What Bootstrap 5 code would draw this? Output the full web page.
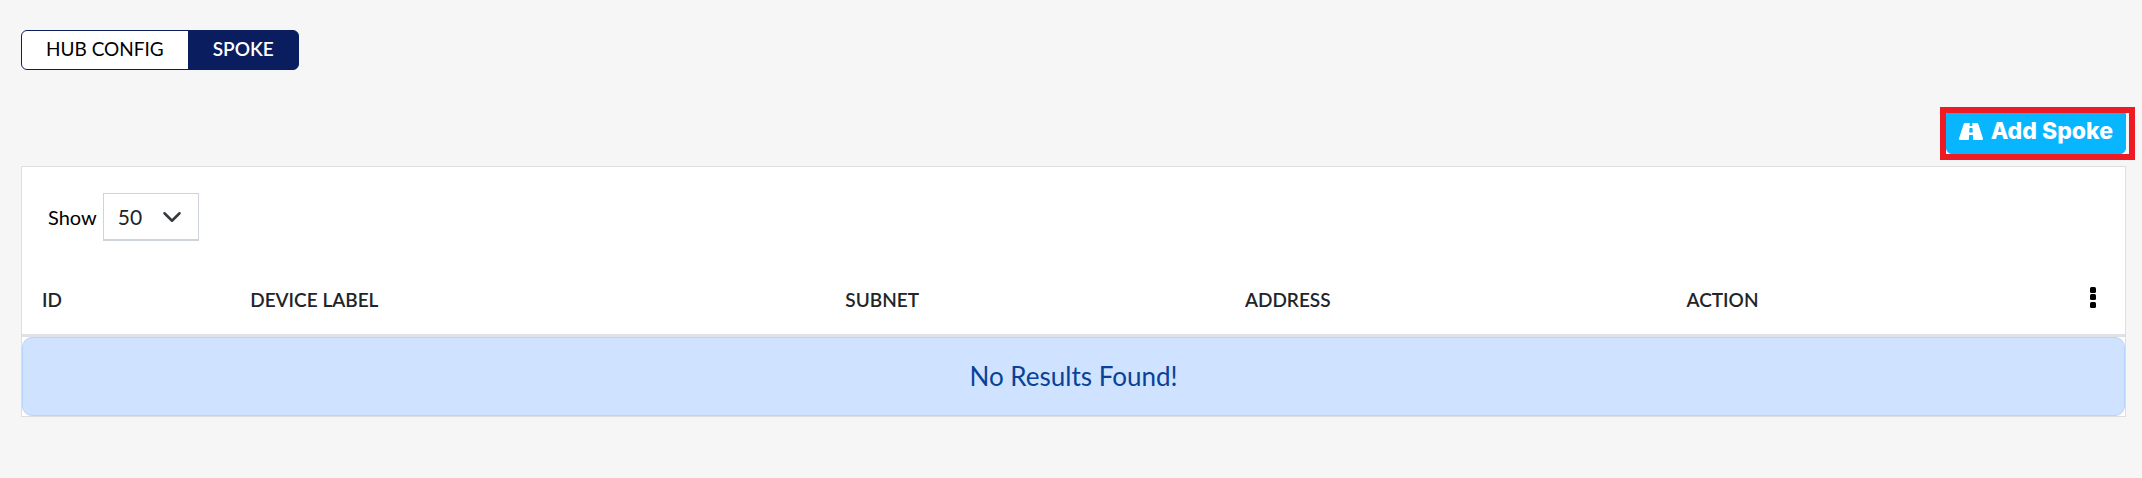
<!DOCTYPE html>
<html lang="en">
<head>
<meta charset="utf-8">
<meta name="viewport" content="width=device-width, initial-scale=1">
<title>Spoke</title>
<link href="https://cdn.jsdelivr.net/npm/bootstrap@5.3.0/dist/css/bootstrap.min.css" rel="stylesheet">
<style>
body { background: #f6f6f6; font-family: Lato, sans-serif; font-size: 20px; line-height: 24px; color: #212529; }
.page { padding: 30px 16px 0 21px; }
.mode-tabs .btn { --bs-btn-font-size: 19px; --bs-btn-line-height: 24px; --bs-btn-padding-x: 24px; --bs-btn-border-radius: 6px; --bs-btn-color: #000; --bs-btn-bg: #fff; --bs-btn-border-color: #0a1d5e; --bs-btn-hover-bg: #eef; --bs-btn-active-color: #fff; --bs-btn-active-bg: #0a1d5e; --bs-btn-active-border-color: #0a1d5e; padding-top: 6px; padding-bottom: 8px; }
.mode-tabs .btn.active { font-weight: 600; }
.toolbar { margin: 37px -9px 6px 0; }
.highlight { border: 6px solid #ed1c24; padding-right: 3px; }
.btn-spoke { --bs-btn-color: #fff; --bs-btn-bg: #08b5ff; --bs-btn-border-color: #08b5ff; --bs-btn-hover-color: #fff; --bs-btn-hover-bg: #009fe3; --bs-btn-padding-x: 12px; --bs-btn-padding-y: 5px; --bs-btn-font-size: 23px; --bs-btn-line-height: 24px; --bs-btn-font-weight: 800; font-family: Inter, sans-serif; border-radius: 0 0 6px 6px; padding-bottom: 10px; }
.panel { background: #fff; border: 1px solid #dcdfe1; }
.length { padding: 26px 26px 0; color: #000; gap: 6px; }
.length .form-select { width: 96px; height: 48px; border: 1px solid #ced4da; border-bottom-width: 2px; border-radius: 0; padding: 0 40px 0 14px; font-size: 21px; line-height: 30px; background-position: right 16px center; background-size: 20px 20px; }
.grid { table-layout: fixed; }
.grid th { padding: 45px 20px 21px; font-size: 19px; font-weight: 600; border-bottom: 3px solid #dee2e6; vertical-align: middle; }
.grid td { padding: 0; border: 0; }
.empty { --bs-alert-bg: #cfe2ff; --bs-alert-border-color: #b6d4fe; --bs-alert-color: #084298; --bs-alert-border-radius: 10px; font-size: 26px; line-height: 32px; padding: 22px 23px 23px; }
.c-id { width: 9.9%; } .c-label { width: 28.3%; } .c-subnet { width: 19%; } .c-address { width: 21%; } .c-action { width: 15%; }
</style>
<script src="https://cdn.jsdelivr.net/npm/bootstrap@5.3.0/dist/js/bootstrap.bundle.min.js"></script>
</head>
<body>
<main class="page">
  <div class="btn-group mode-tabs d-inline-flex" role="group" aria-label="Configuration">
    <button type="button" class="btn">HUB CONFIG</button>
    <button type="button" class="btn active" aria-pressed="true">SPOKE</button>
  </div>
  <div class="toolbar d-flex justify-content-end">
    <div class="highlight d-flex">
      <button type="button" class="btn btn-spoke d-flex align-items-center gap-2">
        <svg width="24" height="17" viewBox="0 0 24 17" aria-hidden="true"><path fill="#fff" fill-rule="evenodd" d="M6 0H10.800L10.600 3H13.400L13.200 0H18Q19 0 19.300 1L24 15.500Q24 17 23 17H14.200L13.900 12H10.100L9.800 17H1Q0 17 0 15.500L4.700 1Q5 0 6 0ZM10.500 5L10.200 9.500H13.800L13.500 5Z"/></svg>
        Add Spoke
      </button>
    </div>
  </div>
  <section class="panel">
    <div class="length d-flex align-items-center">
      <label for="len">Show</label>
      <select id="len" class="form-select"><option>50</option><option>100</option></select>
    </div>
    <table class="table grid mb-0">
      <thead>
        <tr>
          <th class="c-id" scope="col">ID</th>
          <th class="c-label" scope="col">DEVICE LABEL</th>
          <th class="c-subnet" scope="col">SUBNET</th>
          <th class="c-address" scope="col">ADDRESS</th>
          <th class="c-action" scope="col">ACTION</th>
          <th class="text-end" scope="col"><button type="button" class="btn p-0 border-0 d-inline-flex me-1 mb-1 align-middle" aria-label="Columns"><svg width="16" height="22" viewBox="0 0 16 22"><g fill="#000"><rect x="5" width="6" height="6" rx="1.500"/><rect x="5" y="7" width="6" height="6" rx="1.500"/><rect x="5" y="15" width="6" height="6" rx="1.500"/></g></svg></button></th>
        </tr>
      </thead>
      <tbody>
        <tr><td colspan="6"><div class="alert empty text-center mb-0">No Results Found!</div></td></tr>
      </tbody>
    </table>
  </section>
</main>
</body>
</html>
